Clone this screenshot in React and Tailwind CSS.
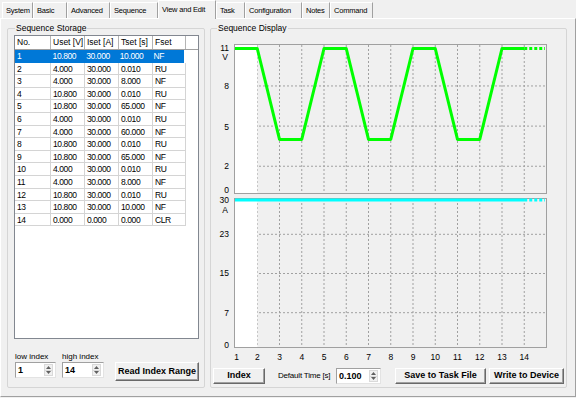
import React from 'react';

const TABS = [
  { name: 'System', w: 'w-[31px]' },
  { name: 'Basic', w: 'w-[34px]' },
  { name: 'Advanced', w: 'w-[43px]' },
  { name: 'Sequence', w: 'w-[48px]' },
  { name: 'View and Edit', w: 'w-[58px]', active: true },
  { name: 'Task', w: 'w-[29px]' },
  { name: 'Configuration', w: 'w-[57px]' },
  { name: 'Notes', w: 'w-[28px]' },
  { name: 'Command', w: 'w-[43px]' },
];

const COLS = [
  { name: 'No.', w: 'w-[36px]' },
  { name: 'Uset [V]', w: 'w-[34px]' },
  { name: 'Iset [A]', w: 'w-[34px]' },
  { name: 'Tset [s]', w: 'w-[34px]' },
  { name: 'Fset', w: 'w-[33px]' },
];

const ROWS = [
  ['1', '10.800', '30.000', '10.000', 'NF'],
  ['2', '4.000', '30.000', '0.010', 'RU'],
  ['3', '4.000', '30.000', '8.000', 'NF'],
  ['4', '10.800', '30.000', '0.010', 'RU'],
  ['5', '10.800', '30.000', '65.000', 'NF'],
  ['6', '4.000', '30.000', '0.010', 'RU'],
  ['7', '4.000', '30.000', '60.000', 'NF'],
  ['8', '10.800', '30.000', '0.010', 'RU'],
  ['9', '10.800', '30.000', '65.000', 'NF'],
  ['10', '4.000', '30.000', '0.010', 'RU'],
  ['11', '4.000', '30.000', '8.000', 'NF'],
  ['12', '10.800', '30.000', '0.010', 'RU'],
  ['13', '10.800', '30.000', '10.000', 'NF'],
  ['14', '0.000', '0.000', '0.000', 'CLR'],
];

// chart geometry (page coordinates)
const X0 = 235;
const DX = 22.25;
const xAt = (i) => X0 + (i - 1) * DX;
const yV = (v) => 193 - v * 13.38;
const yA = (a) => 347 - a * 4.9;

const buildPath = (col, yFn) => {
  const pts = [[xAt(1), yFn(Number(ROWS[0][col]))]];
  for (let i = 1; i <= 13; i++) {
    const v = Number(ROWS[i - 1][col]);
    const mode = ROWS[i - 1][4];
    if (mode === 'RU') {
      pts.push([xAt(i + 1), yFn(v)]);
    } else {
      pts.push([xAt(i), yFn(v)]);
      pts.push([xAt(i + 1), yFn(v)]);
    }
  }
  return pts.map((p) => p.join(',')).join(' ');
};

const Spinner = ({ value, w }) => (
  <div className={`flex ${w} h-[16px] bg-white border border-t-[#a0a0a0] border-l-[#a0a0a0] border-r-[#e3e3e3] border-b-[#e3e3e3]`}>
    <div className="flex-1 pl-[2px] font-bold text-[9px] leading-[14px]">{value}</div>
    <div className="w-[9px] my-[1px] mr-[2px] flex flex-col bg-[#f0f0f0] border border-[#d9d9d9]">
      <div className="flex-1 flex items-center justify-center border-b border-[#d9d9d9]">
        <svg width="5" height="3" viewBox="0 0 5 3"><path d="M0 3 L2.5 0 L5 3 Z" fill="#606060" /></svg>
      </div>
      <div className="flex-1 flex items-center justify-center">
        <svg width="5" height="3" viewBox="0 0 5 3"><path d="M0 0 L2.5 3 L5 0 Z" fill="#606060" /></svg>
      </div>
    </div>
  </div>
);

const Button = ({ children, className }) => (
  <div className={`flex items-center justify-center font-bold text-[9px] bg-[#f0f0f0] border border-t-white border-l-white border-r-[#696969] border-b-[#696969] shadow-[inset_-1px_-1px_0_#a0a0a0] ${className}`}>
    {children}
  </div>
);

const Plot = ({ top, bottom, hLines, labels, unit, unitY, children }) => (
  <g>
    {hLines.map((y) => (
      <line key={y} x1={X0} x2={546} y1={y} y2={y} stroke="#a0a0a0" strokeDasharray="2 2" />
    ))}
    {Array.from({ length: 13 }, (_, k) => (
      <line key={k} x1={xAt(k + 2)} x2={xAt(k + 2)} y1={top} y2={bottom} stroke="#a0a0a0" strokeDasharray="2 2" />
    ))}
    <rect x={235} y={top} width={22.25} height={bottom - top} fill="#ffffff" />
    <rect x={234.5} y={top - 0.5} width={312} height={bottom - top + 1} fill="none" stroke="#a0a0a0" />
    {labels.map(([t, y]) => (
      <text key={t} x={229} y={y + 3} textAnchor="end" fontSize="8.5" fill="#000">{t}</text>
    ))}
    <text x={225} y={unitY + 3} textAnchor="middle" fontSize="8.5" fill="#000">{unit}</text>
    {children}
  </g>
);

const App = () => {
  return (
    <div className="w-[576px] h-[398px] bg-[#f0f0f0] overflow-hidden text-black text-[8.5px] font-['Liberation_Sans',Arial,sans-serif]">
      {/* tab strip */}
      <div className="flex items-end h-[18px] pl-[2px] text-[7.5px] tracking-[-0.2px]">
        {TABS.map((t) =>
          t.active ? (
            <div key={t.name} className={`${t.w} relative z-10 -mb-[1px] h-[19px] pl-[3px] pt-[2px] leading-[13px] bg-[#f0f0f0] whitespace-nowrap overflow-hidden border-t border-l border-r border-t-white border-l-white border-r-[#a0a0a0]`}>
              {t.name}
            </div>
          ) : (
            <div key={t.name} className={`${t.w} h-[16px] pl-[3px] leading-[15px] whitespace-nowrap overflow-hidden border-t border-l border-r border-t-white border-l-white border-r-[#a0a0a0]`}>
              {t.name}
            </div>
          )
        )}
      </div>

      {/* tab page */}
      <div className="h-[379px] flex pl-[6px] pt-[9px] border border-t-white border-l-white border-r-[#a0a0a0] border-b-[#a0a0a0]">
        {/* Sequence Storage */}
        <div className="relative w-[198px] h-[360px] border border-[#d5d5d5] rounded-[2px]">
          <span className="absolute -top-[6px] left-[7px] px-[1px] bg-[#f0f0f0] leading-[10px]">Sequence Storage</span>
          <div className="ml-[6px] mt-[6px] w-[185px] h-[304px] border border-[#828790] bg-white">
            <div className="flex h-[14px] border-b border-[#a0a0a0]">
              {COLS.map((c) => (
                <div key={c.name} className={`${c.w} pl-[2px] leading-[13px] border-r border-[#b4b4b4] whitespace-nowrap`}>{c.name}</div>
              ))}
            </div>
            {ROWS.map((r, ri) => (
              <div key={r[0]} className={`flex h-[12.6px] ${ri === 0 ? 'bg-[#0078d7] text-white w-[169px]' : ''}`}>
                {r.map((v, ci) => (
                  <div key={ci} className={`${COLS[ci].w} pl-[2px] leading-[12px] tracking-[-0.4px] border-r border-b ${ri === 0 ? 'border-[#0078d7]' : 'border-[#d4d4d4]'}`}>{v}</div>
                ))}
              </div>
            ))}
          </div>

          <div className="flex items-start ml-[7px] mt-[13px]">
            <div className="flex flex-col">
              <div className="h-[10px] leading-[9px] text-[8px]">low index</div>
              <Spinner value="1" w="w-[41px]" />
            </div>
            <div className="flex flex-col ml-[6px]">
              <div className="h-[10px] leading-[9px] text-[8px]">high index</div>
              <Spinner value="14" w="w-[42px]" />
            </div>
            <Button className="ml-[11px] mt-[10px] w-[84px] h-[19px]">Read Index Range</Button>
          </div>
        </div>

        {/* Sequence Display */}
        <div className="relative ml-[5px] w-[357px] h-[360px] border border-[#d5d5d5] rounded-[2px]">
          <span className="absolute -top-[6px] left-[6px] px-[1px] bg-[#f0f0f0] leading-[10px]">Sequence Display</span>
          <svg className="block mt-[7px]" width="354" height="328" viewBox="211 36 354 328">
            <Plot
              top={45}
              bottom={193}
              hLines={[yV(8), yV(5), yV(2)]}
              labels={[['11', 48], ['8', 86], ['5', 127], ['2', 166], ['0', 190]]}
              unit="V"
              unitY={57}
            >
              <polyline points={buildPath(1, yV)} fill="none" stroke="#00ff00" strokeWidth="3" strokeLinejoin="round" />
              <line x1={xAt(14)} x2={545} y1={yV(10.8)} y2={yV(10.8)} stroke="#00ff00" strokeWidth="3" strokeDasharray="3 2" />
            </Plot>
            <Plot
              top={199}
              bottom={347}
              hLines={[yA(23), yA(15), yA(7)]}
              labels={[['30', 200], ['23', 234], ['15', 273], ['7', 313], ['0', 345]]}
              unit="A"
              unitY={210}
            >
              <line x1={235} x2={xAt(14)} y1={yA(30)} y2={yA(30)} stroke="#00ffff" strokeWidth="3" />
              <line x1={xAt(14)} x2={545} y1={yA(30)} y2={yA(30)} stroke="#00ffff" strokeWidth="3" strokeDasharray="3 2" />
            </Plot>
            {Array.from({ length: 14 }, (_, k) => (
              <text key={k} x={xAt(k + 1) + (k === 0 ? 1.5 : 0)} y={360} textAnchor="middle" fontSize="8.5" fill="#000">{k + 1}</text>
            ))}
          </svg>

          <div className="flex items-center mt-[4px] h-[16px]">
            <Button className="ml-[2px] w-[52px] h-[16px]">Index</Button>
            <div className="ml-[13px] w-[57px] text-[8px] tracking-[-0.2px] whitespace-nowrap">Default Time [s]</div>
            <div className="ml-[1px]">
              <Spinner value="0.100" w="w-[45px]" />
            </div>
            <Button className="ml-[14px] w-[91px] h-[16px]">Save to Task File</Button>
            <Button className="ml-[3px] w-[75px] h-[16px]">Write to Device</Button>
          </div>
        </div>
      </div>
    </div>
  );
};

export default App;
